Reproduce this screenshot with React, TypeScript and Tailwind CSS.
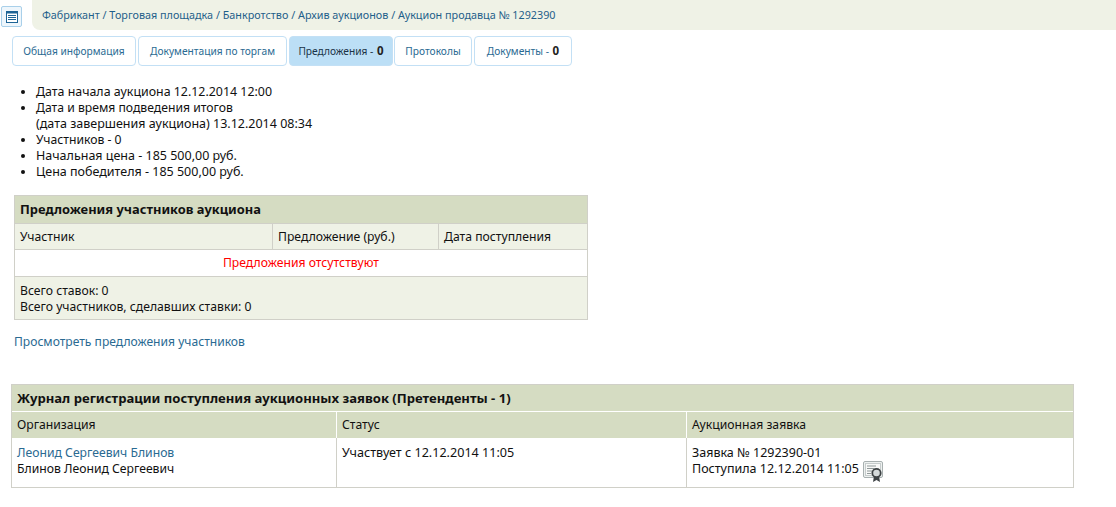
export default function App() {
  const tabs = [
    ["Общая информация", "", "w-[124px]"],
    ["Документация по торгам", "", "w-[149px]"],
    ["Предложения - ", "0", "w-[104px] active"],
    ["Протоколы", "", "w-[78px] -ml-[1px]"],
    ["Документы - ", "0", "w-[98px]"],
  ];
  return (
    <div className="w-[1116px] h-[507px] bg-white overflow-hidden font-['Noto_Sans','Liberation_Sans',sans-serif] text-[12.2px] leading-[16px] text-[#111]">
      <div className="flex items-start">
        <div className="w-[32px] pl-[1px] pt-[6px] shrink-0">
          <div className="w-[21px] h-[21px] rounded-[2px] border border-[#a9d0ea] bg-[#eef6fc] flex items-center justify-center">
            <svg width="12" height="12" viewBox="0 0 12 12">
              <rect x="0.5" y="0.5" width="11" height="11" fill="#fff" stroke="#1d6496" />
              <rect x="0" y="0" width="12" height="2.5" fill="#1d6496" />
              <path d="M2 4.5h8M2 6.5h8M2 8.5h8" stroke="#1d6496" strokeWidth="1" />
            </svg>
          </div>
        </div>
        <div className="flex-1 h-[30px] bg-[#eff2e6] rounded-bl-[8px] pl-[10px] flex items-center text-[10.8px] text-[#1f5f8a]">
          Фабрикант / Торговая площадка / Банкротство / Архив аукционов / Аукцион продавца № 1292390
        </div>
      </div>

      <div className="flex gap-[2px] pl-[12px] mt-[6px]">
        {tabs.map(([label, num, cls]) => {
          const active = cls.includes("active");
          return (
            <div
              key={label}
              className={`h-[30px] rounded-[4px] border border-[#c3e0f5] flex items-center justify-center text-[10.2px] ${cls.replace(" active", "")} ${active ? "bg-[#bcdff6] text-[#1a3346]" : "bg-white text-[#2a6a92]"}`}
            >
              <span className="whitespace-pre">{label}</span>
              {num && <b className="text-[#222] text-[11.5px] ml-[1px]">{num}</b>}
            </div>
          );
        })}
      </div>

      <ul className="list-disc mt-[18px] pl-[36px]">
        <li className="text-[12.4px]">Дата начала аукциона 12.12.2014 12:00</li>
        <li>Дата и время подведения итогов<br /><span className="text-[12.5px]">(дата завершения аукциона) 13.12.2014 08:34</span></li>
        <li>Участников - 0</li>
        <li className="text-[12.5px]">Начальная цена - 185 500,00 руб.</li>
        <li className="text-[12.5px]">Цена победителя - 185 500,00 руб.</li>
      </ul>

      <div className="ml-[14px] mt-[15px] w-[574px] border border-[#d0d0c8]">
        <div className="h-[27px] bg-[#d5dcc2] flex items-center pl-[5px] pb-[1px] font-bold text-[12.9px]">Предложения участников аукциона</div>
        <div className="grid grid-cols-[257px_166px_1fr] h-[26px] bg-[#eff2e6] border-t border-[#d0d0c8]">
          <div className="pl-[5px] flex items-center">Участник</div>
          <div className="pl-[5px] flex items-center border-l border-[#d0d0c8]">Предложение (руб.)</div>
          <div className="pl-[5px] flex items-center border-l border-[#d0d0c8]">Дата поступления</div>
        </div>
        <div className="h-[27px] flex items-center justify-center text-[#f00] border-t border-[#d0d0c8] bg-white">Предложения отсутствуют</div>
        <div className="h-[43px] bg-[#eff2e6] border-t border-[#d0d0c8] pl-[5px] pt-[6px]">
          <div>Всего ставок: 0</div>
          <div>Всего участников, сделавших ставки: 0</div>
        </div>
      </div>

      <div className="ml-[14px] mt-[14px] text-[#2a6a92] text-[12.1px]">Просмотреть предложения участников</div>

      <div className="ml-[11px] mt-[34px] w-[1063px] border border-[#d0d0c8]">
        <div className="h-[26px] bg-[#d5dcc2] flex items-center pl-[5px] font-bold text-[13.1px]">Журнал регистрации поступления аукционных заявок (Претенденты - 1)</div>
        <div className="grid grid-cols-[324px_350px_1fr] h-[27px] bg-[#d5dcc2] border-t border-white">
          <div className="pl-[5px] flex items-center">Организация</div>
          <div className="pl-[5px] flex items-center border-l border-white">Статус</div>
          <div className="pl-[5px] flex items-center border-l border-white">Аукционная заявка</div>
        </div>
        <div className="grid grid-cols-[324px_350px_1fr] h-[49px] bg-white">
          <div className="pl-[5px] pt-[7px]">
            <div className="text-[#2a6a92]">Леонид Сергеевич Блинов</div>
            <div>Блинов Леонид Сергеевич</div>
          </div>
          <div className="pl-[5px] pt-[7px] border-l border-[#d0d0c8] text-[12.6px]">Участвует с 12.12.2014 11:05</div>
          <div className="pl-[5px] pt-[7px] border-l border-[#d0d0c8] text-[12.5px]">
            <div>Заявка № 1292390-01</div>
            <div className="flex items-center h-[16px]">
              Поступила 12.12.2014 11:05
              <svg className="ml-[4px] mt-[5px] shrink-0" width="21" height="22" viewBox="0 0 21 22">
                <rect x="0.5" y="0.5" width="19" height="16" rx="1.5" fill="#eef1f0" stroke="#a8b0b0" />
                <rect x="2.5" y="2.5" width="15" height="12" fill="#f8f9f8" stroke="#c6cccc" />
                <path d="M4 5h9M4 7.5h7M4 10h5M4 12.5h4" stroke="#8f9898" strokeWidth="1" />
                <path d="M11 15l-1 6 3.5-2 3.5 2-1-6z" fill="#3d4244" />
                <circle cx="13.5" cy="12" r="4.2" fill="#d5dada" stroke="#3d4244" strokeWidth="1.8" />
              </svg>
            </div>
          </div>
        </div>
      </div>
    </div>
  );
}
